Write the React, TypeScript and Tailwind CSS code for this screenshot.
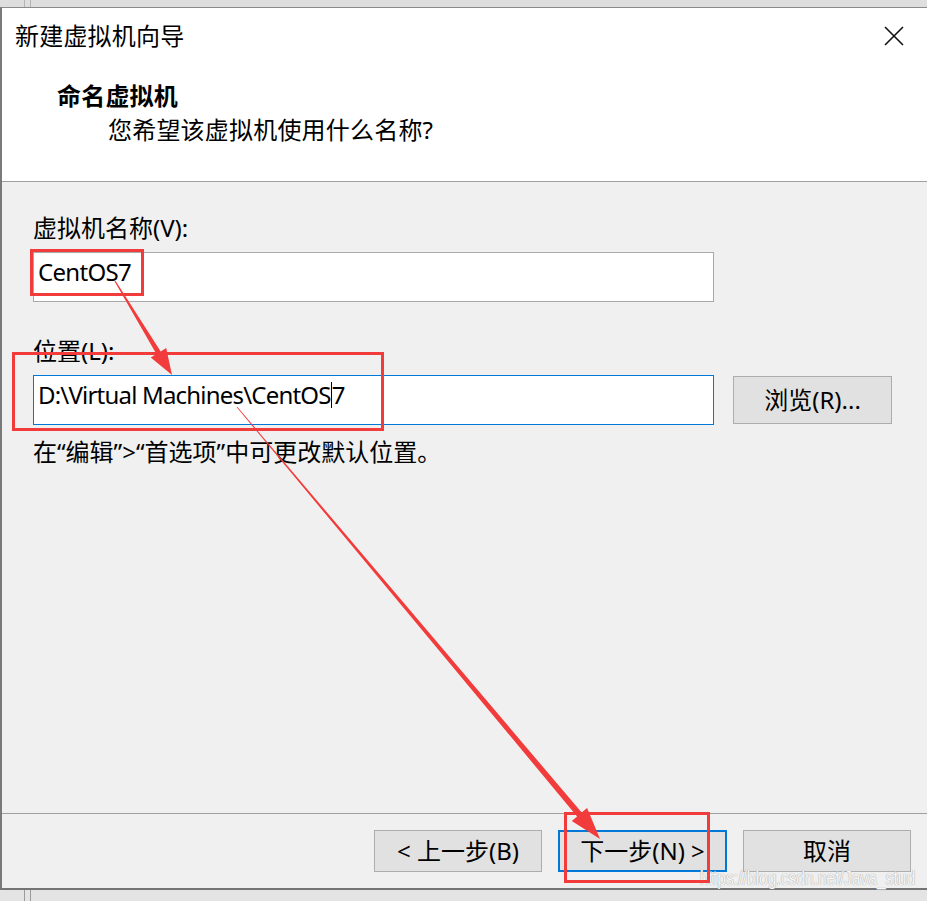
import React from "react";

type Pt = [number, number];

function arrowPoints(s: Pt, t: Pt, w0: number, w1: number, headLen: number, headW: number) {
  const dx = t[0] - s[0];
  const dy = t[1] - s[1];
  const len = Math.hypot(dx, dy);
  const ux = dx / len;
  const uy = dy / len;
  const nx = -uy;
  const ny = ux;
  const b: Pt = [t[0] - ux * headLen, t[1] - uy * headLen];
  const pts: Pt[] = [
    [s[0] + (nx * w0) / 2, s[1] + (ny * w0) / 2],
    [b[0] + (nx * w1) / 2, b[1] + (ny * w1) / 2],
    [b[0] + (nx * headW) / 2, b[1] + (ny * headW) / 2],
    t,
    [b[0] - (nx * headW) / 2, b[1] - (ny * headW) / 2],
    [b[0] - (nx * w1) / 2, b[1] - (ny * w1) / 2],
    [s[0] - (nx * w0) / 2, s[1] - (ny * w0) / 2],
  ];
  return pts.map((p) => `${p[0].toFixed(1)},${p[1].toFixed(1)}`).join(" ");
}

const font = "font-['Noto_Sans','Noto_Sans_CJK_SC',sans-serif]";

export default function App() {
  return (
    <div className={`relative w-[927px] h-[901px] overflow-hidden bg-[#e4e4e4] ${font} text-[#000]`}>
      {/* top strip behind the window */}
      <div className="h-[7px] bg-[#dedede] flex">
        <div className="ml-[24px] w-px bg-[#b5b5b5]" />
        <div className="ml-[5px] w-px bg-[#b5b5b5]" />
      </div>

      {/* window */}
      <div className="w-[927px] h-[883px] flex flex-col border-t border-t-[#8a8a8a] border-l-2 border-l-[#7a7a7a] border-b-2 border-b-[#747474] bg-[#f0f0f0]">
        {/* header */}
        <div className="h-[174px] bg-white border-b border-b-[#a0a0a0] flex flex-col">
          <div className="flex items-start justify-between pt-[13px] pl-[13px] pr-[22px]">
            <div className="text-[24px] leading-[30px] tracking-[0.2px]">新建虚拟机向导</div>
            <svg width="22" height="22" viewBox="0 0 22 22" className="mt-[4px]">
              <path d="M2 2 L20 20 M20 2 L2 20" stroke="#111" strokeWidth="1.6" fill="none" />
            </svg>
          </div>
          <div className="pl-[55px] mt-[30px] text-[24px] leading-[30px] font-bold tracking-[0.2px]">命名虚拟机</div>
          <div className="pl-[106px] mt-[4px] text-[24px] leading-[30px] tracking-[0.2px]">您希望该虚拟机使用什么名称?</div>
        </div>

        {/* body */}
        <div className="flex-1 flex flex-col pl-[31px] pt-[31px]">
          <div className="text-[24px] leading-[30px]">虚拟机名称(V):</div>
          <div className="mt-[9px] w-[681px] h-[50px] bg-white border border-[#a9a9a9] flex items-start pl-[4px] pt-[4px] text-[24px] leading-[30px] tracking-[-0.7px]">
            CentOS7
          </div>
          <div className="mt-[34px] text-[24px] leading-[30px]">位置(L):</div>
          <div className="mt-[9px] flex items-start gap-[19px]">
            <div className="w-[681px] h-[50px] bg-white border border-[#0078d7] flex items-start pl-[4px] pt-[4px] text-[24px] leading-[30px] whitespace-pre tracking-[-0.8px]">
              <span>D:\Virtual Machines\CentOS</span>
              <span className="inline-block w-px h-[26px] bg-black mt-[2px]" />
              <span>7</span>
            </div>
            <div className="mt-[1px] w-[159px] h-[48px] bg-[#e1e1e1] border border-[#adadad] flex items-center justify-center text-[24px]">
              浏览(R)...
            </div>
          </div>
          <div className="mt-[12px] text-[24px] leading-[30px]">在“编辑”&gt;“首选项”中可更改默认位置。</div>
        </div>

        {/* footer */}
        <div className="border-t border-t-[#a0a0a0] h-[75px] flex items-start justify-end gap-[16px] pt-[16px] pr-[16px]">
          <div className="w-[168px] h-[42px] bg-[#e1e1e1] border border-[#adadad] flex items-center justify-center text-[24px]">
            &lt; 上一步(B)
          </div>
          <div className="w-[169px] h-[42px] bg-[#e1e1e1] border-2 border-[#0078d7] flex items-center justify-center text-[24px]">
            下一步(N) &gt;
          </div>
          <div className="w-[168px] h-[42px] bg-[#e1e1e1] border border-[#adadad] flex items-center justify-center text-[24px]">
            取消
          </div>
        </div>
      </div>

      {/* bottom strip lines */}
      <div className="absolute left-[24px] top-[890px] w-px h-[11px] bg-[#9a9a9a]" />
      <div className="absolute left-[30px] top-[890px] w-px h-[11px] bg-[#9a9a9a]" />

      {/* watermark */}
      <div className="absolute left-[700px] top-[866px] origin-left scale-x-[0.78] whitespace-nowrap text-[20px] leading-[24px] text-[#f6f6f6] font-['Liberation_Sans',sans-serif] [text-shadow:0_0_1px_#a8a8a8,0_0_1px_#a8a8a8]">
        https://blog.csdn.net/Java_stud
      </div>

      {/* annotation red boxes */}
      <div className="absolute left-[30px] top-[249px] w-[114px] h-[47px] border-[3px] border-[#f23b3b]" />
      <div className="absolute left-[12px] top-[352px] w-[372px] h-[79px] border-[3px] border-[#f23b3b]" />
      <div className="absolute left-[564px] top-[812px] w-[146px] h-[71px] border-[3px] border-[#f23b3b]" />

      {/* annotation arrows */}
      <svg className="absolute left-0 top-0" width="927" height="901" viewBox="0 0 927 901">
        <polygon points={arrowPoints([115, 281], [172, 375], 1.2, 5, 26, 18)} fill="#f23b3b" />
        <polygon points={arrowPoints([237, 407], [600, 839], 0.8, 6, 32, 20)} fill="#f23b3b" />
      </svg>
    </div>
  );
}
